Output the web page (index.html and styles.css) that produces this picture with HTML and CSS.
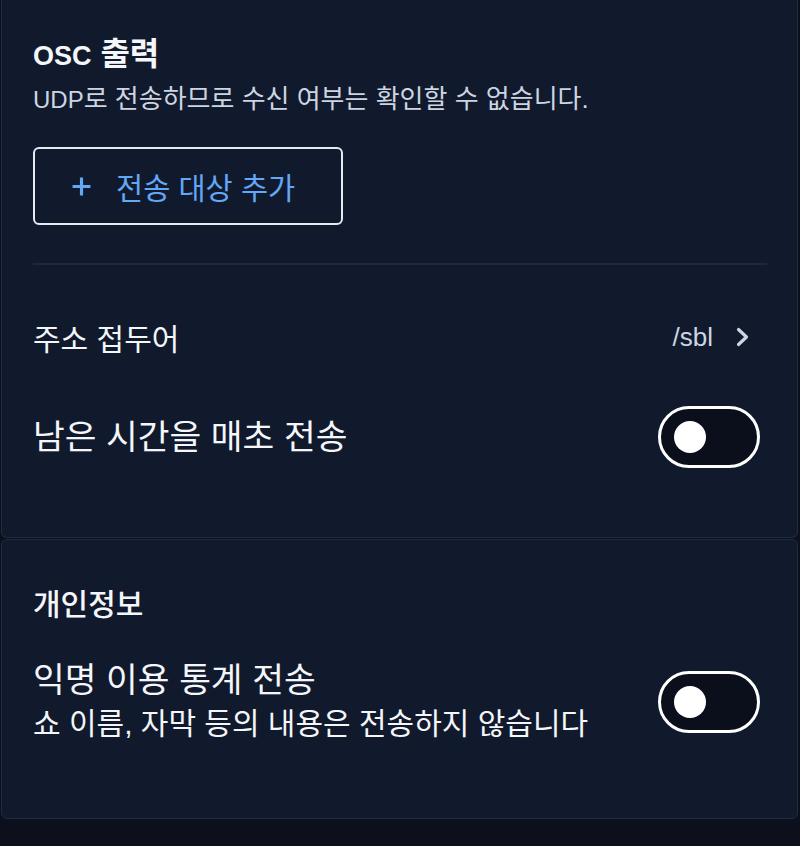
FILE: index.html
```html
<!DOCTYPE html>
<html lang="ko">
<head>
<meta charset="utf-8">
<title>설정</title>
<link rel="stylesheet" href="styles.css">
</head>
<body>
<main class="page">
  <section class="card card-top">
    <h2 class="section-title title-osc"><span class="latin-title">OSC</span> 출력</h2>
    <p class="section-desc"><span class="latin-desc">UDP</span>로 전송하므로 수신 여부는 확인할 수 없습니다.</p>
    <button class="add-btn" type="button">
      <svg class="plus" viewBox="0 0 20 20" width="20" height="20" aria-hidden="true"><path d="M10 1.5v17M1.5 10h17" stroke="currentColor" stroke-width="3" fill="none"/></svg>
      <span>전송 대상 추가</span>
    </button>
    <hr class="divider">
    <div class="row">
      <span class="row-label label-sm">주소 접두어</span>
      <span class="row-value">/sbl
        <svg class="chev" viewBox="0 0 16 24" width="16" height="24" aria-hidden="true"><path d="M3.5 4.5l8 7.5-8 7.5" stroke="currentColor" stroke-width="3.2" fill="none" stroke-linecap="round" stroke-linejoin="round"/></svg>
      </span>
    </div>
    <div class="row">
      <span class="row-label label-lg">남은 시간을 매초 전송</span>
      <span class="toggle"><span class="knob"></span></span>
    </div>
  </section>
  <section class="card card-bottom">
    <h2 class="section-title title-privacy">개인정보</h2>
    <div class="row row-stat">
      <div class="stat-text">
        <div class="label-lg">익명 이용 통계 전송</div>
        <div class="stat-desc">쇼 이름, 자막 등의 내용은 전송하지 않습니다</div>
      </div>
      <span class="toggle"><span class="knob"></span></span>
    </div>
  </section>
</main>
</body>
</html>
```
FILE: styles.css
```css
html, body {
  margin: 0;
  padding: 0;
  background: #0b101c;
  height: 100%;
}
body {
  font-family: "Liberation Sans", "Noto Sans CJK KR", sans-serif;
  color: #f4f6fa;
  overflow: hidden;
}
.page {
  display: flex;
  flex-direction: column;
  gap: 1px;
  width: 797px;
  margin-left: 1px;
}
.card {
  background: #111a2c;
  border: 1px solid #222c3e;
  border-radius: 6px;
  padding: 0 30px 0 31px;
  box-sizing: border-box;
}
.card-top {
  border-top: none;
  border-top-left-radius: 0;
  border-top-right-radius: 0;
  padding-top: 38px;
  padding-bottom: 50px;
}
.card-bottom {
  padding-top: 49px;
  padding-bottom: 76px;
}
.section-title {
  margin: 0;
  font-weight: 700;
  line-height: 32px;
  height: 32px;
}
.title-osc {
  font-size: 32px;
}
.latin-title {
  font-size: 27px;
}
.title-privacy {
  font-size: 30px;
  font-weight: 500;
}
.section-desc {
  margin: 14px 0 0;
  font-size: 26px;
  line-height: 30px;
  height: 30px;
  color: #cdd5e2;
}
.latin-desc {
  font-size: 24px;
}
.add-btn {
  margin-top: 33px;
  display: flex;
  align-items: center;
  gap: 24px;
  height: 78px;
  width: 310px;
  padding: 0 0 0 36px;
  box-sizing: border-box;
  background: transparent;
  border: 2px solid #e6e9ef;
  border-radius: 6px;
  color: #62a8f7;
  font-family: inherit;
  font-size: 29.5px;
}
.plus {
  flex: none;
  width: 21px;
  height: 21px;
}
.divider {
  border: none;
  height: 2px;
  background: #1f293a;
  margin: 38px 0 22px;
}
.row {
  display: flex;
  align-items: center;
  justify-content: space-between;
  height: 100px;
}
.label-sm {
  font-size: 30px;
}
.label-lg {
  font-size: 34.5px;
  line-height: 36px;
}
.row-value {
  display: flex;
  align-items: center;
  gap: 22px;
  font-size: 26px;
  color: #cdd5e2;
  padding-right: 16px;
}
.chev {
  color: #cdd5e2;
}
.toggle {
  flex: none;
  width: 102px;
  height: 62px;
  box-sizing: border-box;
  border: 3px solid #ffffff;
  border-radius: 31px;
  background: #0b0f1b;
  display: flex;
  align-items: center;
  padding-left: 13px;
  margin-right: 7px;
}
.knob {
  width: 32px;
  height: 32px;
  border-radius: 50%;
  background: #ffffff;
}
.row-stat {
  margin-top: 41px;
  height: 80px;
}
.stat-text {
  display: flex;
  flex-direction: column;
}
.stat-desc {
  margin-top: 8px;
  font-size: 30px;
  line-height: 36px;
  color: #f4f6fa;
}
```
